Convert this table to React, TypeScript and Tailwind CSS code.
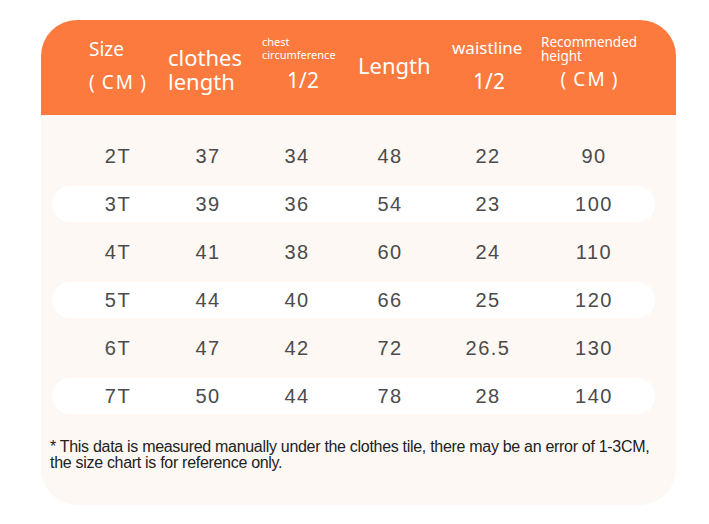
import React from 'react';

const rows = [
    ['2T', '37', '34', '48', '22', '90'],
    ['3T', '39', '36', '54', '23', '100'],
    ['4T', '41', '38', '60', '24', '110'],
    ['5T', '44', '40', '66', '25', '120'],
    ['6T', '47', '42', '72', '26.5', '130'],
    ['7T', '50', '44', '78', '28', '140'],
];

const colW = ['w-[90px]', 'w-[90px]', 'w-[88px]', 'w-[98px]', 'w-[98px]', 'w-[114px]'];

const App = () => {
    return (
        <div className="w-[709px] h-[524px] bg-white pt-[20px] pl-[41px]">
            <div className="w-[635px] h-[485px] bg-[#fdf8f4] rounded-[36px] overflow-hidden flex flex-col">
                {/* Header */}
                <div className="h-[95px] bg-[#fc7a3e] text-white flex pl-[48px] font-['Noto_Sans',sans-serif] shrink-0">
                    <div className="w-[79px] pt-[17px] flex flex-col">
                        <span className="text-[19px] leading-[24px]">Size</span>
                        <span className="text-[19px] leading-[24px] mt-[9px] tracking-[2px]">(&thinsp;CM&thinsp;)</span>
                    </div>
                    <div className="w-[94px] pt-[25px]">
                        <p className="text-[22px] leading-[24px]">
                            clothes
                            <br />
                            length
                        </p>
                    </div>
                    <div className="w-[96px] pt-[15px] flex flex-col">
                        <div className="w-[82px] flex flex-col">
                            <p className="text-[11px] leading-[13px]">
                                chest
                                <br />
                                circumference
                            </p>
                            <span className="text-[21px] leading-[24px] mt-[7px] text-center">1/2</span>
                        </div>
                    </div>
                    <div className="w-[94px] flex items-center pb-[5px]">
                        <span className="text-[22px] leading-[26px]">Length</span>
                    </div>
                    <div className="w-[89px] pt-[17px] flex flex-col">
                        <div className="w-[74px] flex flex-col">
                            <span className="text-[17px] leading-[22px]">waistline</span>
                            <span className="text-[21px] leading-[24px] mt-[10px] text-center">1/2</span>
                        </div>
                    </div>
                    <div className="pt-[15px] flex flex-col">
                        <div className="w-[98px] flex flex-col">
                            <p className="text-[13.5px] leading-[14px]">
                                Recommended
                                <br />
                                height
                            </p>
                            <span className="text-[19px] leading-[24px] mt-[4px] text-center tracking-[2px]">(&thinsp;CM&thinsp;)</span>
                        </div>
                    </div>
                </div>

                {/* Rows */}
                <div className="pt-[23px] flex flex-col gap-[12px] font-['Liberation_Sans',Arial,sans-serif] text-[#4b4b4b]">
                    {rows.map((r, i) => (
                        <div
                            key={r[0]}
                            className={`h-[36px] ml-[11px] mr-[21px] rounded-full flex items-center pl-[21px] ${i % 2 === 1 ? 'bg-white' : ''}`}
                        >
                            {r.map((c, j) => (
                                <div key={j} className={`${colW[j]} text-center text-[20px] tracking-[1.5px]`}>
                                    {c}
                                </div>
                            ))}
                        </div>
                    ))}
                </div>

                {/* Footnote */}
                <div className="mt-[25px] pl-[9px] pr-[4px] font-['Liberation_Sans',Arial,sans-serif] text-[16px] leading-[16px] text-[#222] tracking-[-0.3px]">
                    * This data is measured manually under the clothes tile, there may be an error of 1-3CM,
                    <br />
                    the size chart is for reference only.
                </div>
            </div>
        </div>
    );
};

export default App;
